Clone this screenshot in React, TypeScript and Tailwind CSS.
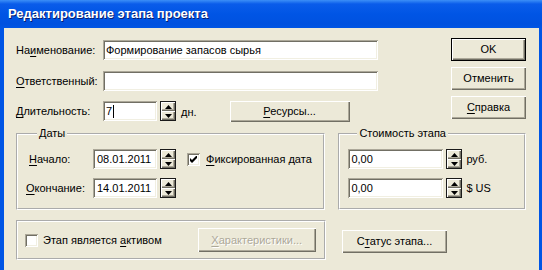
import React from 'react';

const sunken =
  'bg-white shadow-[inset_1px_1px_0_#ACA899,inset_-1px_-1px_0_#FFFFFF,inset_2px_2px_0_#716F64,inset_-2px_-2px_0_#F1EFE2]';
const raised =
  'bg-[#ECE9D8] shadow-[inset_1px_1px_0_#FFFFFF,inset_-1px_-1px_0_#716F64,inset_-2px_-2px_0_#ACA899]';

const U: React.FC<{ children: React.ReactNode }> = ({ children }) => (
  <span className="underline underline-offset-[2px]">{children}</span>
);

const Spinner: React.FC = () => (
  <div className="ml-[3px] flex h-[20px] w-[16px] flex-col border border-[#1a1a1a]">
    <div className={`flex flex-1 items-center justify-center ${raised}`}>
      <svg width="7" height="4" viewBox="0 0 7 4">
        <path d="M3.5 0 L7 4 L0 4 Z" fill="#000" />
      </svg>
    </div>
    <div className={`flex flex-1 items-center justify-center ${raised}`}>
      <svg width="7" height="4" viewBox="0 0 7 4">
        <path d="M0 0 L7 0 L3.5 4 Z" fill="#000" />
      </svg>
    </div>
  </div>
);

const Field: React.FC<{ value?: string; className?: string; caret?: boolean }> = ({ value, className = '', caret }) => (
  <div className={`flex h-[20px] items-center pl-[3px] ${sunken} ${className}`}>
    <span className="leading-none">{value}</span>
    {caret && <span className="ml-[1px] h-[13px] w-[1px] bg-black" />}
  </div>
);

const Checkbox: React.FC<{ checked?: boolean }> = ({ checked }) => (
  <div className={`flex h-[13px] w-[13px] items-center justify-center ${sunken}`}>
    {checked && (
      <svg width="7" height="7" viewBox="0 0 7 7">
        <path d="M0 2 L0 5 L2 7 L7 2 L7 -1 L2 4 Z" fill="#000" />
      </svg>
    )}
  </div>
);

const Button: React.FC<{ children: React.ReactNode; className?: string; disabled?: boolean }> = ({
  children,
  className = '',
  disabled,
}) => (
  <div className={`flex items-center justify-center ${raised} ${className}`}>
    <span className={disabled ? 'text-[#ACA899] [text-shadow:1px_1px_0_#FFFFFF]' : ''}>{children}</span>
  </div>
);

const Group: React.FC<{ title: string; className?: string; children: React.ReactNode }> = ({
  title,
  className = '',
  children,
}) => (
  <fieldset className={`border-2 border-white [border-style:groove] ${className}`}>
    <legend className="ml-[9px] px-[2px] leading-[13px]">{title}</legend>
    {children}
  </fieldset>
);

const App: React.FC = () => {
  return (
    <div className="flex h-[270px] w-[542px] flex-col overflow-hidden bg-[#0055E5] font-['Liberation_Sans',Arial,sans-serif] text-[11px] text-black">
      {/* Title bar */}
      <div className="flex h-[28px] flex-none items-center bg-[linear-gradient(to_bottom,#3C8FF7_0px,#0A5CEA_4px,#0055E5_14px,#0051DF_24px,#0055E5_28px)] pl-[8px]">
        <span className="text-[13px] font-bold text-white [text-shadow:1px_1px_0_#0A1E6E]">
          Редактирование этапа проекта
        </span>
      </div>

      {/* Body */}
      <div className="ml-[4px] mr-[3px] flex-1 bg-[#ECE9D8] pl-[12px] pr-[13px] pt-[10px]">
        <div className="flex items-start">
          {/* Main fields */}
          <div className="mt-[2px] flex w-[362px] flex-col">
            <div className="flex h-[20px] items-center">
              <span className="w-[87px]">
                На<U>и</U>менование:
              </span>
              <Field value="Формирование запасов сырья" className="w-[275px]" />
            </div>
            <div className="mt-[11px] flex h-[20px] items-center">
              <span className="w-[87px]">
                <U>О</U>тветственный:
              </span>
              <Field className="w-[275px]" />
            </div>
            <div className="mt-[10px] flex h-[20px] items-center">
              <span className="w-[87px]">
                <U>Д</U>лительность:
              </span>
              <Field value="7" caret className="w-[54px]" />
              <Spinner />
              <span className="ml-[5px] mt-[3px]">дн.</span>
              <Button className="ml-[33px] h-[21px] w-[120px]">
                <U>Р</U>есурсы...
              </Button>
            </div>
          </div>

          {/* Dialog buttons */}
          <div className="ml-auto flex w-[75px] flex-col gap-[6px]">
            <div className="border border-black">
              <Button className="h-[21px] w-full">OK</Button>
            </div>
            <Button className="h-[23px] w-full">Отменить</Button>
            <Button className="h-[23px] w-full">
              <U>С</U>правка
            </Button>
          </div>
        </div>

        {/* Groups */}
        <div className="mt-[6px] flex items-start gap-[13px]">
          <Group title="Даты" className="h-[83px] w-[310px] pl-[10px] pt-[9px]">
            <div className="flex h-[20px] items-center">
              <span className="w-[65px] pl-[1px]">
                <U>Н</U>ачало:
              </span>
              <Field value="08.01.2011" className="w-[64px] pl-[4px]" />
              <Spinner />
              <div className="ml-[11px]">
                <Checkbox checked />
              </div>
              <span className="ml-[6px]">
                <U>Ф</U>иксированная дата
              </span>
            </div>
            <div className="mt-[9px] flex h-[20px] items-center">
              <span className="ml-[-2px] w-[67px]">
                <U>О</U>кончание:
              </span>
              <Field value="14.01.2011" className="w-[64px] pl-[4px]" />
              <Spinner />
            </div>
          </Group>

          <Group title="Стоимость этапа" className="h-[83px] w-[188px] pl-[8px] pt-[9px]">
            <div className="flex h-[20px] items-center">
              <Field value="0,00" className="w-[95px]" />
              <Spinner />
              <span className="ml-[4px]">руб.</span>
            </div>
            <div className="mt-[9px] flex h-[20px] items-center">
              <Field value="0,00" className="w-[95px]" />
              <Spinner />
              <span className="ml-[4px]">$ US</span>
            </div>
          </Group>
        </div>

        {/* Bottom row */}
        <div className="mt-[10px] flex items-start">
          <div className="flex h-[40px] w-[310px] items-center border-2 border-white pl-[7px] [border-style:groove]">
            <Checkbox />
            <span className="ml-[5px]">
              Этап является <U>а</U>ктивом
            </span>
            <Button disabled className="ml-[36px] h-[24px] w-[118px]">
              <U>Х</U>арактеристики...
            </Button>
          </div>
          <Button className="ml-[16px] mt-[10px] h-[23px] w-[105px]">
            С<U>т</U>атус этапа...
          </Button>
        </div>
      </div>
    </div>
  );
};

export default App;
